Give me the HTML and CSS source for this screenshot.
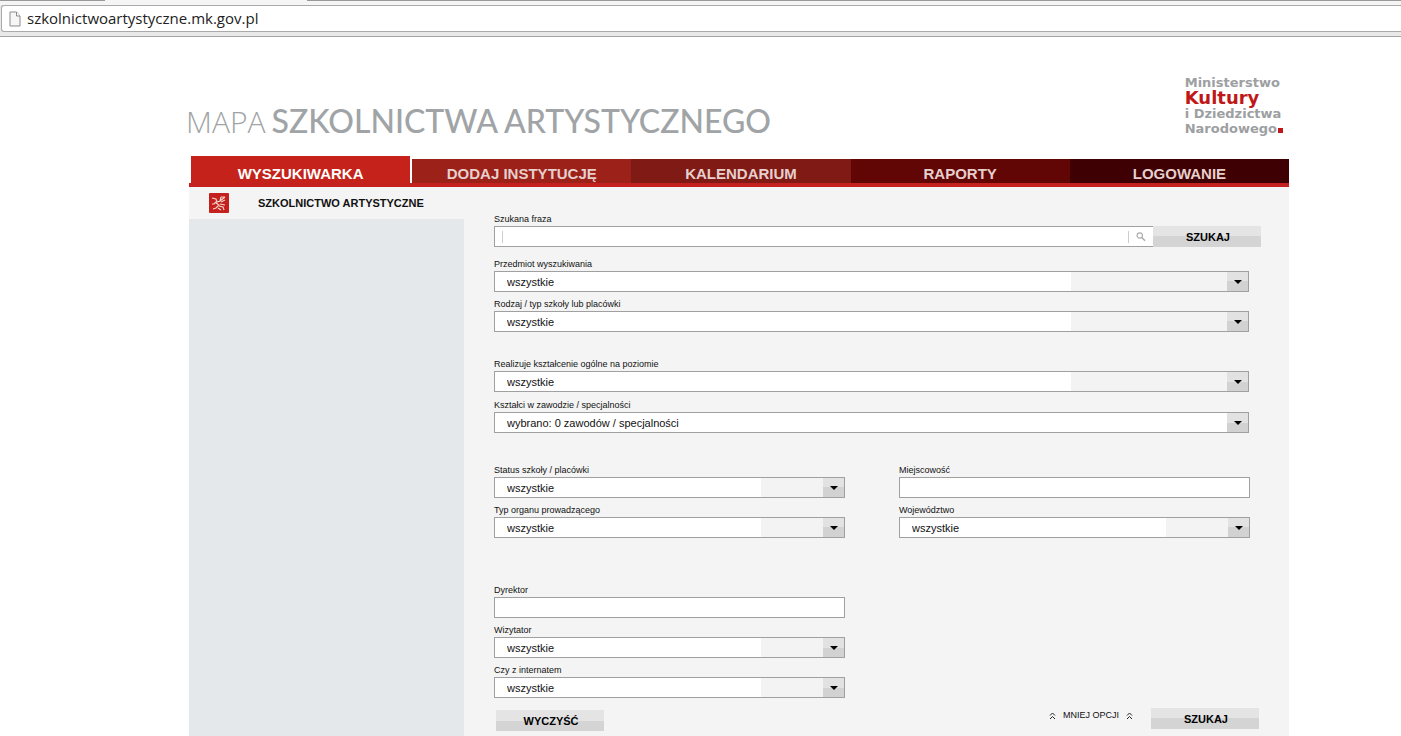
FILE: index.html
```html
<!DOCTYPE html>
<html lang="pl">
<head>
<meta charset="utf-8">
<title>Mapa szkolnictwa artystycznego</title>
<link rel="stylesheet" href="styles.css">
</head>
<body>
<div class="browser-bar">
  <div class="tab-strip"></div>
  <label class="address">
    <svg class="page-icon" viewBox="0 0 12 16" width="12" height="16" aria-hidden="true"><path d="M1 1h6.500l3.500 4v10h-10z" fill="#f6f6f6" stroke="#8b8b8b"/><path d="M7.500 1v4h3.500" fill="#fff" stroke="#8b8b8b"/></svg>
    <input class="address-input" type="text" value="szkolnictwoartystyczne.mk.gov.pl" aria-label="Adres">
  </label>
</div>
<div class="page">
  <header class="header">
    <h1 class="title"><span class="title-light">MAPA</span> <span>SZKOLNICTWA ARTYSTYCZNEGO</span></h1>
    <div class="ministry">
      <span>Ministerstwo</span>
      <span class="ministry-main">Kultury</span>
      <span>i Dziedzictwa</span>
      <span class="ministry-last">Narodowego<i class="dot"></i></span>
    </div>
  </header>
  <nav class="tabs">
    <a class="tab tab-active" href="#">WYSZUKIWARKA</a>
    <a class="tab tab-add" href="#">DODAJ INSTYTUCJĘ</a>
    <a class="tab tab-calendar" href="#">KALENDARIUM</a>
    <a class="tab tab-reports" href="#">RAPORTY</a>
    <a class="tab tab-login" href="#">LOGOWANIE</a>
  </nav>
  <main class="content">
    <aside class="sidebar">
      <h2 class="sidebar-head">
        <svg width="20" height="20" viewBox="0 0 20 20" aria-hidden="true"><rect width="20" height="20" rx="1" fill="#c4201d"/><path d="M3 5l4 1 1 3 3-1 1-4M8 8l-3 3-2 0M7 10l3 2-3 3-3 1M11 8l5-4M12 4l4 0M12 9l4-2M11 11l5 1M10 13l4 1 1 3M9 15l3 2" fill="none" stroke="#f3d3c8" stroke-width="1.200"/></svg>
        SZKOLNICTWO ARTYSTYCZNE
      </h2>
    </aside>
    <form class="form">
      <div class="field">
        <label for="phrase">Szukana fraza</label>
        <div class="search-row">
          <div class="search-box">
            <span class="tick"></span>
            <input id="phrase" type="text">
            <span class="tick"></span>
            <svg width="10" height="10" viewBox="0 0 10 10" aria-hidden="true"><circle cx="3.800" cy="3.500" r="2.700" fill="none" stroke="#aaa" stroke-width="1.200"/><path d="M5.800 5.500l3.200 3.200" stroke="#aaa" stroke-width="1.500"/></svg>
          </div>
          <button class="button" type="submit">SZUKAJ</button>
        </div>
      </div>
      <div class="fields">
        <div class="group">
          <div class="field"><label for="subject">Przedmiot wyszukiwania</label><div class="select wide"><select id="subject"><option>wszystkie</option></select></div></div>
          <div class="field"><label for="kind">Rodzaj / typ szkoły lub placówki</label><div class="select wide"><select id="kind"><option>wszystkie</option></select></div></div>
        </div>
        <div class="group">
          <div class="field"><label for="level">Realizuje kształcenie ogólne na poziomie</label><div class="select wide"><select id="level"><option>wszystkie</option></select></div></div>
          <div class="field"><label for="job">Kształci w zawodzie / specjalności</label><div class="select plain"><select id="job"><option>wybrano: 0 zawodów / specjalności</option></select></div></div>
        </div>
        <div class="group columns">
          <div class="field"><label for="status">Status szkoły / placówki</label><div class="select"><select id="status"><option>wszystkie</option></select></div></div>
          <div class="field"><label for="town">Miejscowość</label><input class="text" id="town" type="text"></div>
          <div class="field"><label for="body">Typ organu prowadzącego</label><div class="select"><select id="body"><option>wszystkie</option></select></div></div>
          <div class="field"><label for="region">Województwo</label><div class="select"><select id="region"><option>wszystkie</option></select></div></div>
        </div>
        <div class="group columns people">
          <div class="field"><label for="head">Dyrektor</label><input class="text" id="head" type="text"></div>
          <div class="field first"><label for="visitor">Wizytator</label><div class="select"><select id="visitor"><option>wszystkie</option></select></div></div>
          <div class="field first"><label for="dorm">Czy z internatem</label><div class="select"><select id="dorm"><option>wszystkie</option></select></div></div>
        </div>
      </div>
      <div class="actions">
        <button class="button button-clear" type="reset">WYCZYŚĆ</button>
        <a class="less" href="#">
          <svg width="7" height="8" viewBox="0 0 7 8" aria-hidden="true"><path d="M1 3.500l2.500-2.500 2.500 2.500M1 7l2.500-2.500 2.500 2.500" fill="none" stroke="#222"/></svg>
          MNIEJ OPCJI
          <svg width="7" height="8" viewBox="0 0 7 8" aria-hidden="true"><path d="M1 3.500l2.500-2.500 2.500 2.500M1 7l2.500-2.500 2.500 2.500" fill="none" stroke="#222"/></svg>
        </a>
        <button class="button" type="submit">SZUKAJ</button>
      </div>
    </form>
  </main>
</div>
</body>
</html>
```
FILE: styles.css
```css
* { box-sizing: border-box; }

body {
  margin: 0;
  min-height: 100vh;
  display: flex;
  flex-direction: column;
  background: #fff;
  color: #111;
  font-family: "Liberation Sans", Arial, sans-serif;
}

/* Browser bar */
.browser-bar {
  height: 37px;
  background: #e9e9e9;
  border-bottom: 1px solid #a3a3a3;
}
.tab-strip {
  height: 5px;
  background: linear-gradient(#999, #999) 0 0 / 105px 1px no-repeat,
    linear-gradient(#999, #999) 307px 0 / 100% 1px no-repeat, #f5f5f5;
}
.address {
  display: flex;
  align-items: center;
  gap: 6px;
  height: 27px;
  margin-left: 1px;
  padding-left: 7px;
  background: #fff;
  border: 1px solid #aaa;
  border-right: 0;
  border-radius: 3px 0 0 3px;
}
.address-input {
  flex: 1;
  padding: 0 0 2px;
  border: 0;
  outline: 0;
  background: none;
  color: #222;
  font: 15px "Open Sans", sans-serif;
}

/* Header */
.page {
  flex: 1;
  display: flex;
  flex-direction: column;
  padding: 0 112px 0 189px;
}
.header {
  display: flex;
  justify-content: space-between;
  align-items: flex-start;
  height: 119px;
  padding: 38px 6px 0 0;
}
.title {
  display: flex;
  align-items: baseline;
  gap: 6px;
  margin: 26px 0 0 -3px;
  color: #a0a4a6;
  font: 500 32px/40px Lato, sans-serif;
  white-space: nowrap;
}
.title-light { font-family: "Open Sans", sans-serif; font-weight: 300; font-size: 30px; }
.ministry {
  display: flex;
  flex-direction: column;
  color: #9da0a2;
  font: bold 13px/15px "DejaVu Sans", sans-serif;
}
.ministry-main {
  color: #c01818;
  font-size: 18px;
  line-height: 16px;
}
.ministry-last { display: flex; align-items: baseline; gap: 1px; }
.dot { width: 5px; height: 5px; background: #c01818; }

/* Tabs */
.tabs {
  display: flex;
  align-items: flex-end;
  padding-left: 2px;
  border-bottom: 4px solid #c52020;
}
.tab {
  flex: 1;
  height: 24px;
  padding-top: 5px;
  color: #e6cfcc;
  font-size: 15px;
  line-height: 19px;
  font-weight: bold;
  text-align: center;
  text-decoration: none;
}
.tab-active {
  height: 27px;
  margin-right: 2px;
  padding-top: 8px;
  background: #c5221b;
  color: #fff;
}
.tab-add { background: #9c2119; }
.tab-calendar { background: #7f1a14; }
.tab-reports { background: #620505; }
.tab-login { background: #3e0002; }

/* Content */
.content { flex: 1; display: flex; background: #f4f4f4; }
.sidebar { flex: 0 0 275px; background: #e4e8eb; }
.sidebar-head {
  display: flex;
  align-items: center;
  gap: 29px;
  height: 32px;
  margin: 0;
  padding: 0 0 1px 20px;
  background: #f4f4f4;
  font-size: 11px;
}
.form { flex: 1; padding: 26px 28px 5px 30px; }
.fields { margin-right: 11px; padding-top: 11px; }
.field label {
  display: block;
  height: 13px;
  font-size: 9px;
  line-height: 13px;
}
.group { display: grid; row-gap: 6px; margin-bottom: 26px; }
.group:nth-child(2) { row-gap: 7px; margin-bottom: 31px; }
.columns { grid-template-columns: 1fr 1fr; column-gap: 54px; margin-bottom: 46px; }
.people { margin-bottom: 10px; }
.first { grid-column: 1; }

.search-row { display: flex; }
.search-box {
  flex: 1;
  display: flex;
  align-items: center;
  gap: 7px;
  height: 21px;
  padding: 0 7px;
  background: #fff;
  border: 1px solid #a0a0a0;
  border-right: 0;
}
.search-box input { flex: 1; min-width: 0; padding: 0; border: 0; outline: 0; font: 11px "Liberation Sans", sans-serif; }
.tick { width: 1px; height: 12px; background: #ccc; }

.text {
  display: block;
  width: 100%;
  height: 21px;
  padding: 0 12px;
  border: 1px solid #a0a0a0;
  background: #fff;
  font: 11px "Liberation Sans", sans-serif;
}
.select { --shade: 83px; position: relative; }
.wide { --shade: 177px; }
.plain { --shade: 0px; }
.wide, .plain { margin-right: 1px; }
.select select {
  display: block;
  width: 100%;
  height: 21px;
  padding: 0 24px 0 12px;
  appearance: none;
  border: 1px solid #a0a0a0;
  border-radius: 0;
  background: linear-gradient(#e2e2e2 50%, #d2d2d2 50%) right / 21px 100% no-repeat,
    linear-gradient(#f3f3f3, #f3f3f3) right / var(--shade) 100% no-repeat, #fff;
  color: #111;
  font: 11px "Liberation Sans", sans-serif;
}
.select::after {
  content: "";
  position: absolute;
  top: 9px;
  right: 7px;
  border: 4px solid transparent;
  border-top-color: #000;
  border-bottom: 0;
  pointer-events: none;
}

.button {
  width: 108px;
  height: 21px;
  padding: 0 0 0 2px;
  border: 0;
  background: linear-gradient(#e4e4e4 50%, #d4d4d4 50%);
  color: #000;
  font: bold 11px "Liberation Sans", sans-serif;
}
.actions { display: flex; align-items: flex-start; padding: 0 2px; }
.button-clear { margin-top: 2px; }
.less {
  display: flex;
  align-items: center;
  gap: 7px;
  margin: 2px 18px 0 auto;
  color: #111;
  font-size: 9px;
  line-height: 11px;
  text-decoration: none;
}
```
